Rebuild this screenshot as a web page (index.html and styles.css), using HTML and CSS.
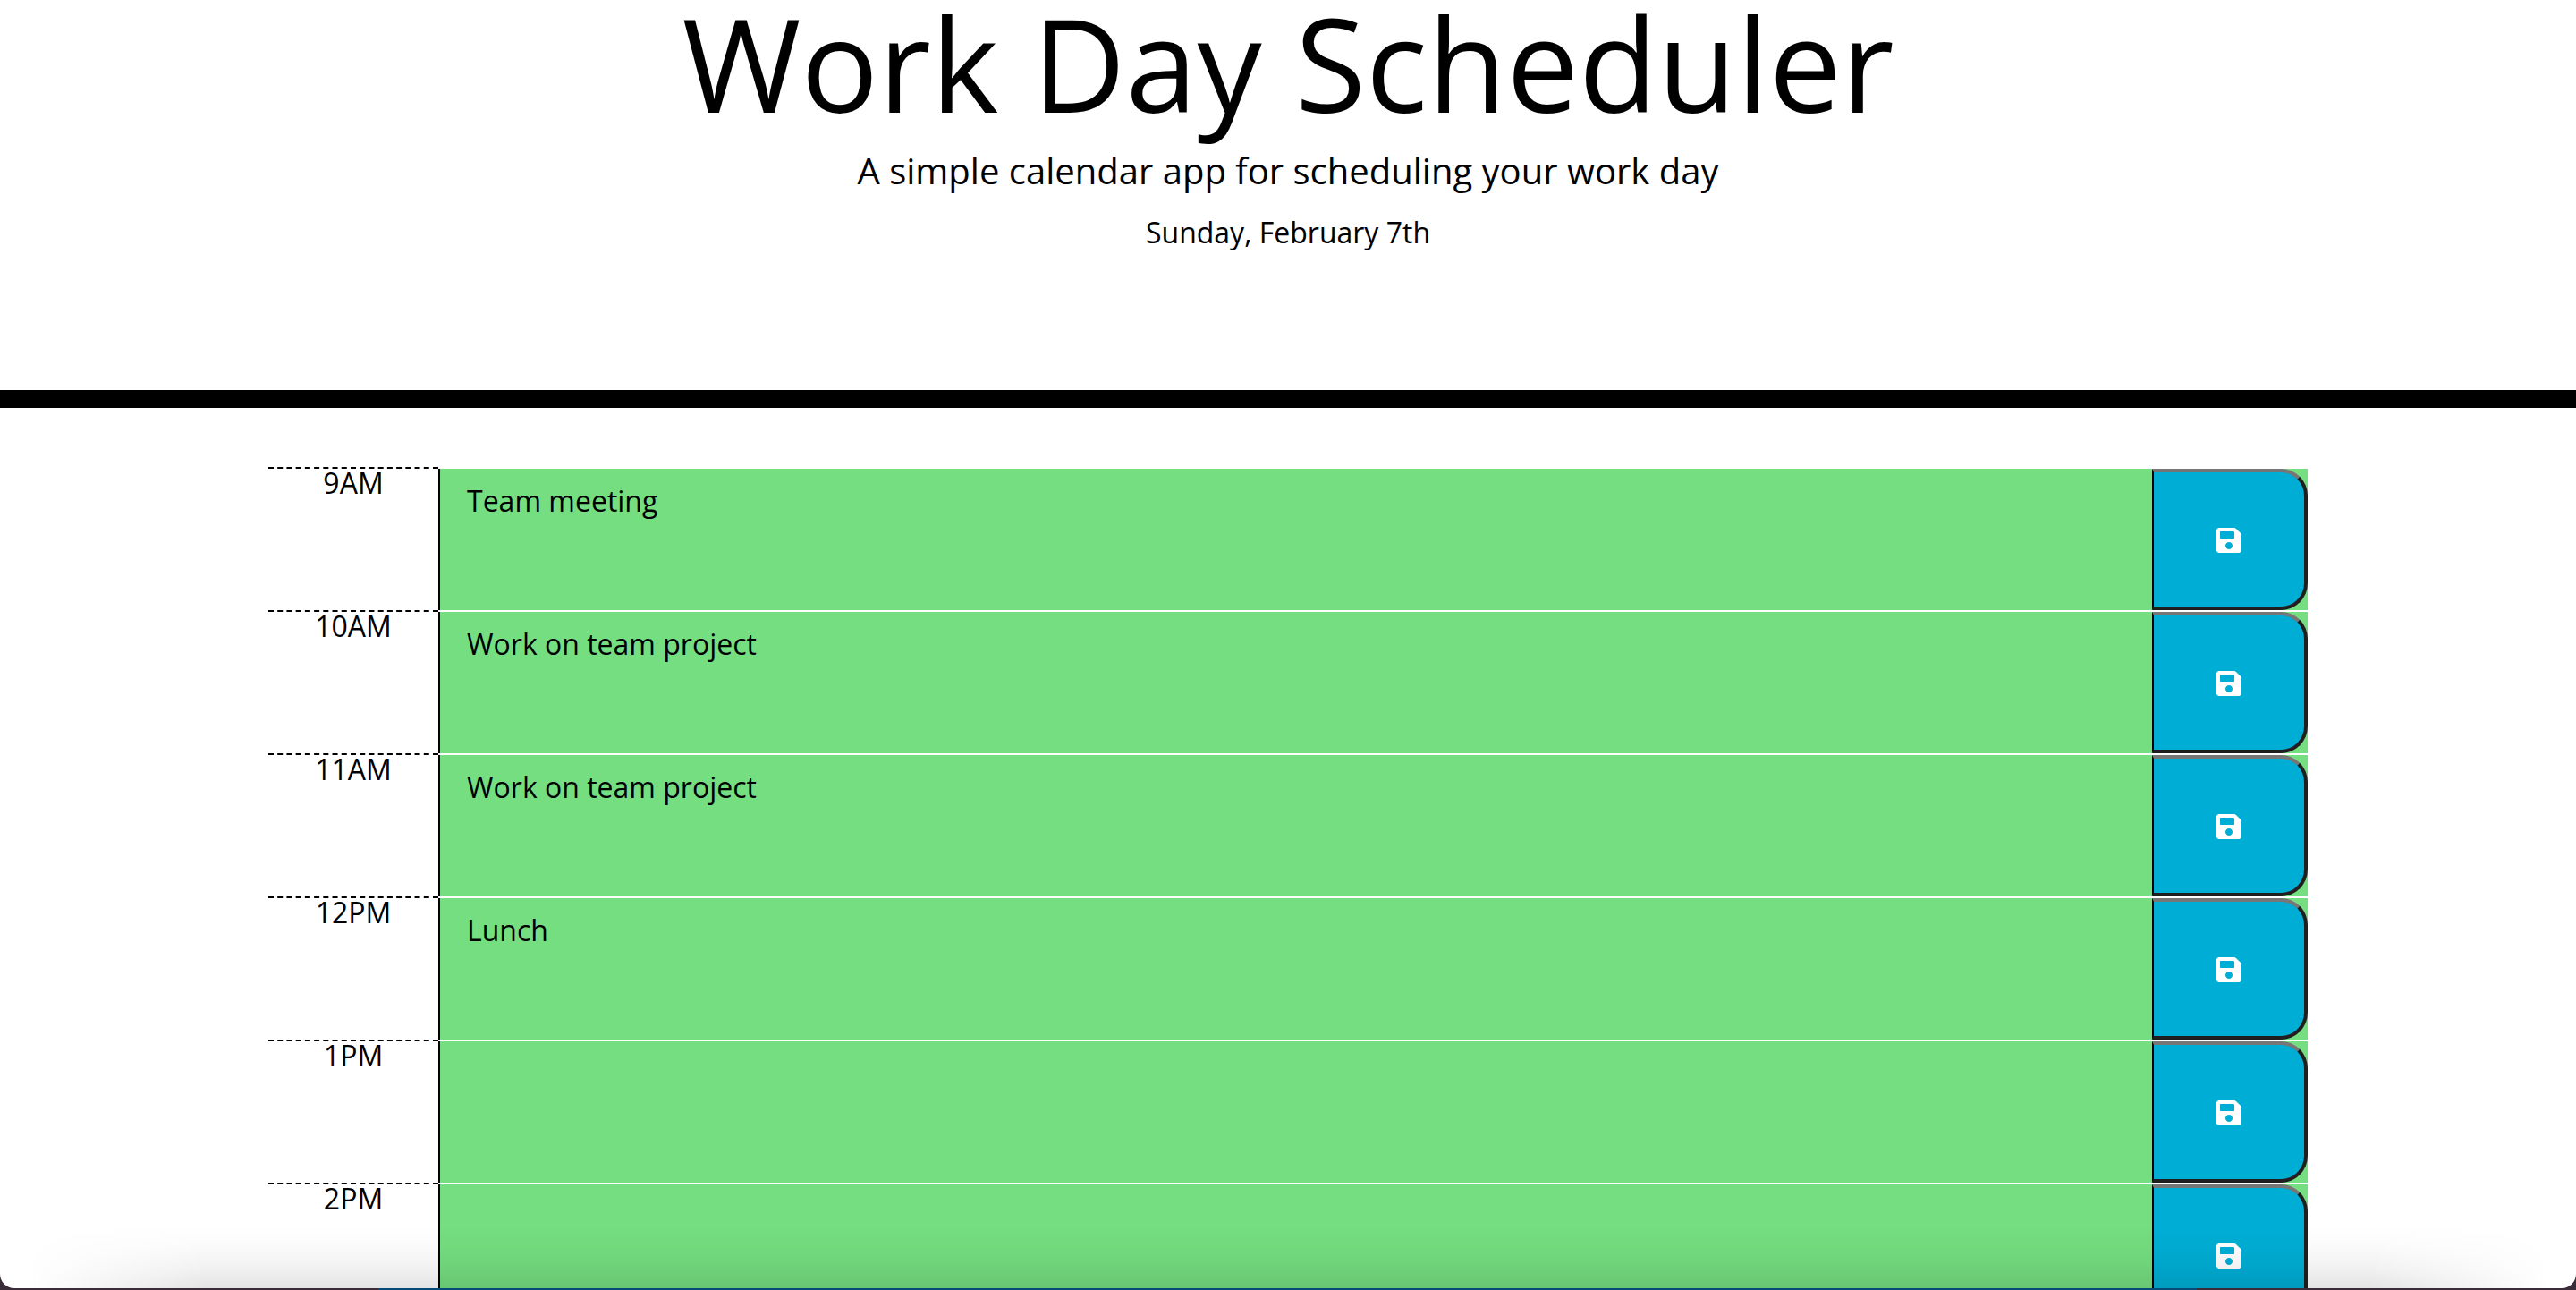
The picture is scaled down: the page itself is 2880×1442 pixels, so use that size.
FILE: index.html
```html
<!DOCTYPE html>
<html lang="en">
<head>
<meta charset="utf-8">
<title>Work Day Scheduler</title>
<link rel="stylesheet" href="styles.css">
</head>
<body>
<svg class="defs" aria-hidden="true"><symbol id="floppy" viewBox="0 0 448 512"><path d="M433.941 129.941l-83.882-83.882A48 48 0 0 0 316.118 32H48C21.49 32 0 53.49 0 80v352c0 26.51 21.49 48 48 48h352c26.51 0 48-21.49 48-48V163.882a48 48 0 0 0-14.059-33.941zM224 416c-35.346 0-64-28.654-64-64 0-35.346 28.654-64 64-64 35.346 0 64 28.654 64 64 0 35.346-28.654 64-64 64zm96-304.52V212c0 6.627-5.373 12-12 12H76c-6.627 0-12-5.373-12-12V108c0-6.627 5.373-12 12-12h228.52c3.183 0 6.235 1.264 8.485 3.515l3.48 3.48A11.996 11.996 0 0 1 320 111.48z"/></symbol></svg>
<header class="jumbotron">
  <h1 class="title">Work Day Scheduler</h1>
  <p class="lead">A simple calendar app for scheduling your work day</p>
  <p class="today">Sunday, February 7th</p>
</header>
<main class="planner">
  <div class="row"><div class="hour">9AM</div><div class="task">Team meeting</div><button class="save"><svg class="icon"><use href="#floppy"/></svg></button></div>
  <div class="row"><div class="hour">10AM</div><div class="task">Work on team project</div><button class="save"><svg class="icon"><use href="#floppy"/></svg></button></div>
  <div class="row"><div class="hour">11AM</div><div class="task">Work on team project</div><button class="save"><svg class="icon"><use href="#floppy"/></svg></button></div>
  <div class="row"><div class="hour">12PM</div><div class="task">Lunch</div><button class="save"><svg class="icon"><use href="#floppy"/></svg></button></div>
  <div class="row"><div class="hour">1PM</div><div class="task"></div><button class="save"><svg class="icon"><use href="#floppy"/></svg></button></div>
  <div class="row"><div class="hour">2PM</div><div class="task"></div><button class="save"><svg class="icon"><use href="#floppy"/></svg></button></div>
</main>
<div class="window-edge">
  <div class="shade"></div>
  <div class="frame"></div>
  <div class="desktop"><span class="desktop-blue"></span></div>
</div>
</body>
</html>
```
FILE: styles.css
```css
html, body {
  margin: 0;
  height: 100%;
  overflow: hidden;
  background: #fff;
  color: #000;
  font-family: "Open Sans", "Noto Sans", sans-serif;
}
.defs {
  position: absolute;
  width: 0;
  height: 0;
}
.jumbotron {
  box-sizing: border-box;
  height: 456px;
  border-bottom: 20px solid #000;
  text-align: center;
  overflow: hidden;
}
.title {
  margin: 0;
  font-size: 144px;
  font-weight: 400;
  line-height: 140px;
}
.lead {
  margin: 21px 0 0;
  font-size: 40px;
  line-height: 60px;
}
.today {
  margin: 15px 0 0;
  font-size: 32px;
  line-height: 48px;
}
.planner {
  width: 2280px;
  margin: 66px auto 0;
}
.row {
  display: grid;
  grid-template-columns: 190px 1fr 174px;
  height: 160px;
}
.hour {
  box-sizing: border-box;
  border-top: 2px dashed #000;
  height: 160px;
  font-size: 32px;
  line-height: 32px;
  text-align: center;
}
.task {
  box-sizing: border-box;
  margin-top: 2px;
  height: 158px;
  border-left: 2px solid #000;
  background: #75de80;
  padding: 12px 30px;
  font-size: 32px;
  line-height: 48px;
}
.save {
  box-sizing: border-box;
  margin: 2px 0 0;
  height: 158px;
  padding: 2px 2px 0 0;
  border: 0;
  background: #75de80;
  display: flex;
  align-items: center;
  justify-content: center;
  position: relative;
}
.save::before {
  content: "";
  position: absolute;
  inset: 0;
  box-sizing: border-box;
  background: #00aed5;
  border-style: solid;
  border-width: 4px 4px 4px 2px;
  border-color: #767676 #1f1f1f #1f1f1f #000;
  border-radius: 0 30px 30px 0;
}
.icon {
  position: relative;
  width: 28px;
  height: 32px;
  fill: #fff;
}
.window-edge {
  position: fixed;
  inset: auto 0 0 0;
  height: 142px;
  overflow: hidden;
  pointer-events: none;
}
.shade {
  position: absolute;
  inset: 0 0 2px 0;
  background: linear-gradient(to bottom, rgba(0,0,0,0) 50%, rgba(0,0,0,0.02) 68%, rgba(0,0,0,0.06) 86%, rgba(0,0,0,0.105) 100%);
  -webkit-mask-image: linear-gradient(to right, transparent 30px, #000 230px, #000 2650px, transparent 2850px);
  mask-image: linear-gradient(to right, transparent 30px, #000 230px, #000 2650px, transparent 2850px);
}
.frame {
  position: absolute;
  inset: 0 0 2px 0;
  border-radius: 0 0 16px 16px;
  box-shadow: 0 0 0 30px #3a2c38;
}
.desktop {
  position: absolute;
  inset: auto 0 0 0;
  height: 2px;
  background: #3a2c38;
}
.desktop-blue {
  position: absolute;
  left: 423px;
  right: 424px;
  top: 0;
  bottom: 0;
  background: #064a78;
}
```
